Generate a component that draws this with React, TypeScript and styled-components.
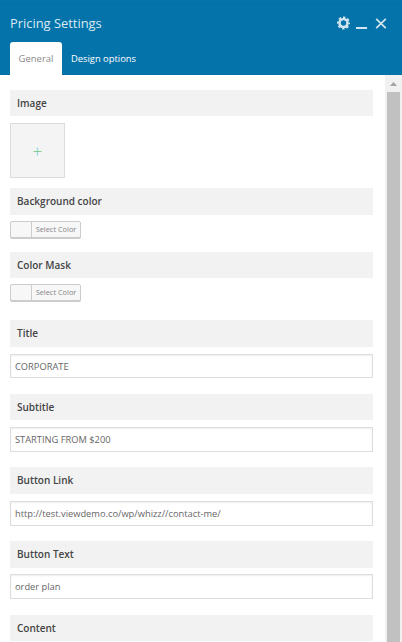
import React from 'react';
import styled, { createGlobalStyle } from 'styled-components';

const GlobalStyle = createGlobalStyle`
  * { box-sizing: border-box; }
  body {
    margin: 0;
    background: #fff;
    overflow: hidden;
    font-family: "Open Sans", "Noto Sans", sans-serif;
  }
`;

const Panel = styled.div`
  display: flex;
  flex-direction: column;
  width: 402px;
  height: 642px;
  overflow: hidden;
  background: #fff;
`;

const Header = styled.header`
  flex: none;
  display: flex;
  flex-direction: column;
  justify-content: space-between;
  height: 75px;
  padding: 0 10px;
  background: linear-gradient(#0473aa 0 3px, #046fa5 3px 4px, #0473aa 4px);
`;

const TitleRow = styled.div`
  display: flex;
  align-items: center;
  justify-content: space-between;
  height: 42px;
  padding: 4px 3px 0 0;
`;

const Heading = styled.h1`
  margin: 0;
  font-size: 12.9px;
  font-weight: 400;
  line-height: 20px;
  color: #d9eaf3;
`;

const Controls = styled.div`
  display: flex;
  gap: 6px;
`;

const Control = styled.button`
  display: flex;
  padding: 0;
  border: 0;
  background: none;
  color: #d3e5ef;
`;

const Tabs = styled.nav`
  display: flex;
  height: 33px;
`;

const Tab = styled.button<{ $active?: boolean }>`
  width: ${(p) => (p.$active ? '52px' : '83px')};
  padding: 0;
  border: 0;
  border-radius: 3px 3px 0 0;
  background: ${(p) => (p.$active ? '#fff' : 'transparent')};
  color: ${(p) => (p.$active ? '#8a8a8a' : '#fff')};
  font: ${(p) => (p.$active ? '400 9.5px' : '500 9.4px')}/33px "Open Sans", sans-serif;
  white-space: nowrap;
`;

const Body = styled.div`
  flex: 1;
  min-height: 0;
  display: flex;
`;

const Form = styled.main`
  flex: 1;
  padding: 15px 12px 0 10px;
  overflow: hidden;
`;

const Field = styled.section<{ $height: number }>`
  height: ${(p) => p.$height}px;
`;

const Label = styled.h2<{ $height: number; $gap: number }>`
  height: ${(p) => p.$height}px;
  margin: 0 0 ${(p) => p.$gap}px;
  padding-left: 7px;
  background: #f2f2f2;
  color: #444;
  font-size: 10px;
  font-weight: 600;
  line-height: 27px;
`;

const AddImage = styled.button`
  display: grid;
  place-items: center;
  width: 55px;
  height: 55px;
  padding: 2px 0 0;
  border: 1px solid #dcdcdc;
  background: #f4f4f4;
`;

const ColorButton = styled.button`
  display: flex;
  width: 71px;
  height: 17px;
  padding: 0;
  border: 1px solid #ccc;
  border-radius: 2px;
  background: #f7f7f7;
  box-shadow: 0 1px 0 #ccc;
  overflow: visible;
`;

const Swatch = styled.span`
  width: 21px;
  height: 15px;
  border-right: 1px solid #ccc;
`;

const ColorText = styled.span`
  flex: 1;
  font: 400 7.4px/15px "Open Sans", sans-serif;
  color: #858585;
  text-align: center;
  white-space: nowrap;
`;

const TextInput = styled.input<{ $height: number }>`
  display: block;
  width: 363px;
  height: ${(p) => p.$height}px;
  padding: 0 4px;
  border: 1px solid #ddd;
  border-radius: 0;
  outline: 0;
  background: #fff;
  box-shadow: inset 0 1px 2px rgba(0, 0, 0, 0.07);
  color: #666;
  font: 400 9.3px "Open Sans", sans-serif;
`;

const Scrollbar = styled.aside`
  display: flex;
  flex-direction: column;
  align-items: center;
  width: 17px;
  background: #f1f1f1;
`;

const ScrollArrow = styled.svg`
  flex: none;
  width: 17px;
  height: 17px;
`;

const Thumb = styled.div`
  flex: 1;
  width: 13px;
  background: #c1c1c1;
`;

type FieldSpec = {
  label: string;
  height: number;
  bar: number;
  gap: number;
  kind: 'image' | 'color' | 'text';
  value?: string;
  control?: number;
};

const fields: FieldSpec[] = [
  { label: 'Image', height: 98, bar: 26, gap: 7, kind: 'image' },
  { label: 'Background color', height: 64, bar: 27, gap: 6, kind: 'color' },
  { label: 'Color Mask', height: 68, bar: 26, gap: 6, kind: 'color' },
  { label: 'Title', height: 74, bar: 27, gap: 7, kind: 'text', value: 'CORPORATE', control: 24 },
  { label: 'Subtitle', height: 73, bar: 26, gap: 7, kind: 'text', value: 'STARTING FROM $200', control: 25 },
  { label: 'Button Link', height: 74, bar: 27, gap: 7, kind: 'text', value: 'http://test.viewdemo.co/wp/whizz//contact-me/', control: 25 },
  { label: 'Button Text', height: 74, bar: 27, gap: 6, kind: 'text', value: 'order plan', control: 25 },
  { label: 'Content', height: 27, bar: 26, gap: 0, kind: 'text' },
];

const FieldControl = ({ field }: { field: FieldSpec }) => {
  if (field.kind === 'image') {
    return (
      <AddImage aria-label="Add image">
        <svg width="9" height="9" viewBox="0 0 9 9">
          <path d="M4.5 0.5V8.5" stroke="#9adbe0" strokeWidth="1.4" />
          <path d="M0.5 4.5H8.5" stroke="#8bc98b" />
        </svg>
      </AddImage>
    );
  }
  if (field.kind === 'color') {
    return (
      <ColorButton>
        <Swatch />
        <ColorText>Select Color</ColorText>
      </ColorButton>
    );
  }
  return field.control ? (
    <TextInput $height={field.control} defaultValue={field.value} aria-label={field.label} spellCheck={false} />
  ) : null;
};

export default function App() {
  return (
    <>
      <GlobalStyle />
      <Panel>
        <Header>
          <TitleRow>
            <Heading>Pricing Settings</Heading>
            <Controls>
              <Control aria-label="Settings">
                <svg width="13" height="14" viewBox="0 0 13 14">
                  <circle cx="6.5" cy="7" r="4" fill="none" stroke="currentColor" strokeWidth="2.6" />
                  <circle cx="6.5" cy="7" r="5.7" fill="none" stroke="currentColor" strokeWidth="1.7" strokeDasharray="2.4 2.077" strokeDashoffset="1.2" />
                </svg>
              </Control>
              <Control aria-label="Minimize">
                <svg width="11" height="14" viewBox="0 0 11 14">
                  <path d="M0 12H11" stroke="currentColor" strokeWidth="2" />
                </svg>
              </Control>
              <Control aria-label="Close">
                <svg width="16" height="14" viewBox="0 0 16 14">
                  <path d="M3.2 2.8L12.8 12.2M12.8 2.8L3.2 12.2" stroke="currentColor" strokeWidth="1.7" />
                </svg>
              </Control>
            </Controls>
          </TitleRow>
          <Tabs>
            <Tab $active>General</Tab>
            <Tab>Design options</Tab>
          </Tabs>
        </Header>
        <Body>
          <Form>
            {fields.map((field) => (
              <Field key={field.label} $height={field.height}>
                <Label $height={field.bar} $gap={field.gap}>{field.label}</Label>
                <FieldControl field={field} />
              </Field>
            ))}
          </Form>
          <Scrollbar>
            <ScrollArrow viewBox="0 0 17 17">
              <path d="M5 11L8.5 7L12 11Z" fill="#a3a3a3" />
            </ScrollArrow>
            <Thumb />
          </Scrollbar>
        </Body>
      </Panel>
    </>
  );
}
